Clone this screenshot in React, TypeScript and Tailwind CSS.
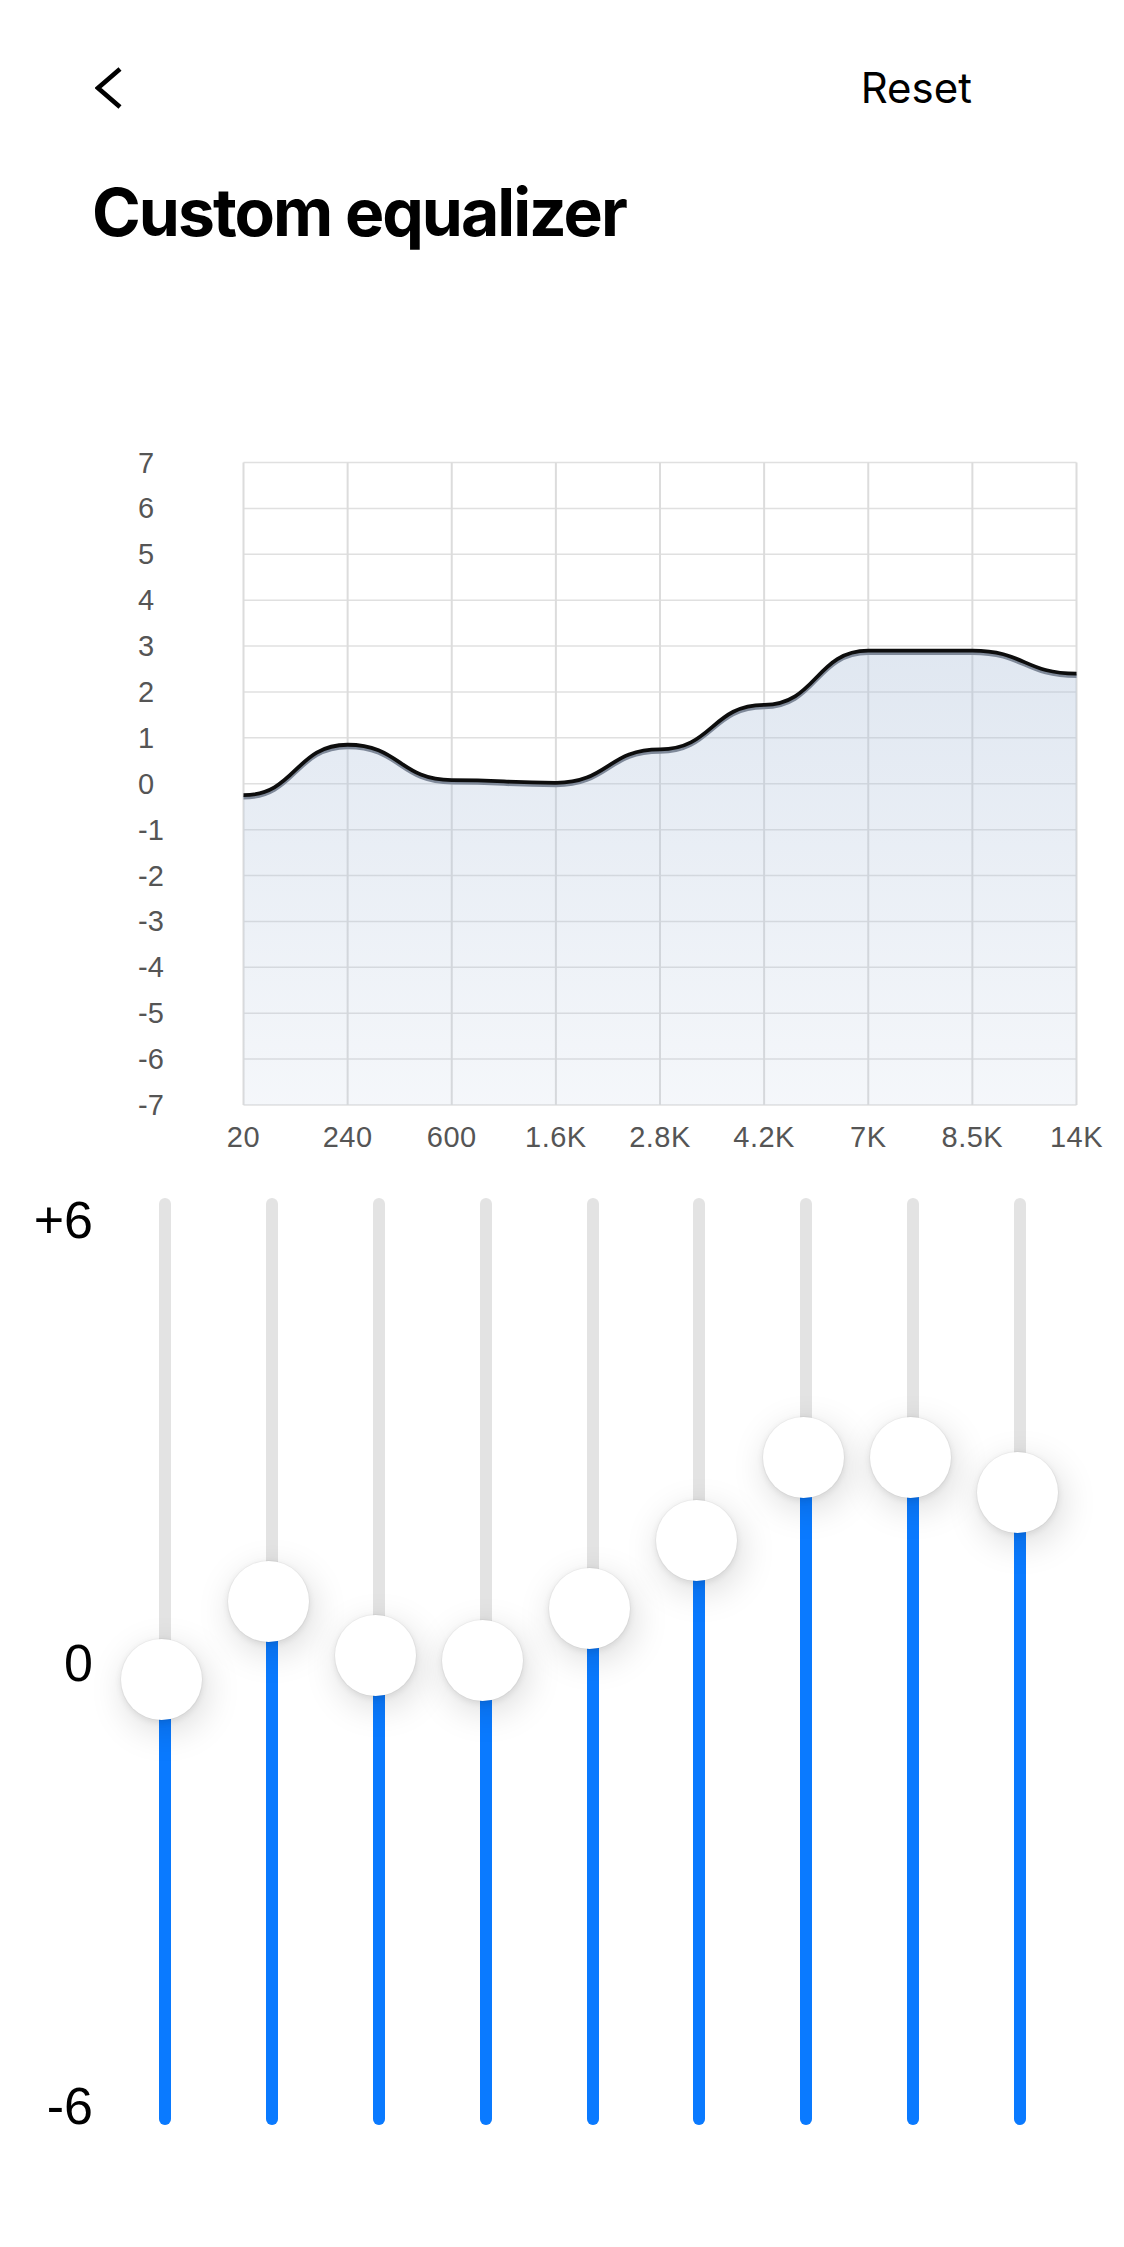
import { useState } from "react"

const BANDS = ["20", "240", "600", "1.6K", "2.8K", "4.2K", "7K", "8.5K", "14K"]
const START_GAINS = [-0.25, 0.85, 0.08, 0.02, 0.75, 1.72, 2.9, 2.9, 2.4]

// chart geometry (svg coords)
const L = 243.5
const R = 1076.5
const T = 32.5
const B = 675
const STEP = (R - L) / 8
const ROW = (B - T) / 14

const gy = (v: number) => T + (7 - v) * ROW

function curvePath(gains: number[]) {
  let d = `M ${L} ${gy(gains[0])}`
  for (let i = 1; i < gains.length; i++) {
    const x0 = L + (i - 1) * STEP
    const x1 = L + i * STEP
    const y0 = gy(gains[i - 1])
    const y1 = gy(gains[i])
    d += ` C ${x0 + STEP / 2} ${y0} ${x1 - STEP / 2} ${y1} ${x1} ${y1}`
  }
  return d
}

function Chart({ gains }: { gains: number[] }) {
  const line = curvePath(gains)
  const area = `${line} L ${R} ${B} L ${L} ${B} Z`
  const ticks = Array.from({ length: 15 }, (_, i) => 7 - i)

  return (
    <svg width="1124" height="740" viewBox="0 0 1124 740" className="block">
      <defs>
        <linearGradient id="eqFill" x1="0" y1={T + 150} x2="0" y2={B} gradientUnits="userSpaceOnUse">
          <stop offset="0" stopColor="#a9bdd8" stopOpacity="0.38" />
          <stop offset="1" stopColor="#a9bdd8" stopOpacity="0.12" />
        </linearGradient>
      </defs>

      {/* grid */}
      {ticks.map((v) => (
        <line key={v} x1={L} x2={R} y1={gy(v)} y2={gy(v)} stroke="#e0e0e0" strokeWidth="1.5" />
      ))}
      {BANDS.map((b, i) => (
        <line key={b} x1={L + i * STEP} x2={L + i * STEP} y1={T} y2={B} stroke="#dcdcdc" strokeWidth="2" />
      ))}

      <path d={area} fill="url(#eqFill)" />
      <path d={line} fill="none" stroke="#7f8999" strokeWidth="3.8" transform="translate(0 2.5)" />
      <path d={line} fill="none" stroke="#0d0d0d" strokeWidth="3.8" />

      {/* axis labels */}
      <g fontFamily="'Liberation Sans', Arial, sans-serif" fontSize="29" fill="#555555">
        {ticks.map((v) => (
          <text key={v} x="138" y={gy(v)} dominantBaseline="central">
            {v}
          </text>
        ))}
        {BANDS.map((b, i) => (
          <text key={b} x={L + i * STEP} y="707" textAnchor="middle" dominantBaseline="central" letterSpacing="0.5">
            {b}
          </text>
        ))}
      </g>
    </svg>
  )
}

const TRACK = 927
const THUMB = 81
const PER_DB = (TRACK - THUMB) / 12

function Slider({ value }: { value: number }) {
  const c = THUMB / 2 + (6 - value) * PER_DB
  return (
    <div className="relative h-full w-[106.9px]">
      <div className="relative mx-auto h-full w-[12px] overflow-hidden rounded-full bg-[#e3e3e3]">
        <div className="absolute bottom-0 left-0 w-full bg-[#0a7aff]" style={{ height: TRACK - c }} />
      </div>
      <div
        className="absolute left-1/2 -ml-[43.5px] h-[81px] w-[81px] rounded-full bg-white shadow-[4px_10px_36px_rgba(0,0,0,0.15),0_2px_7px_rgba(0,0,0,0.09)] ring-1 ring-black/[0.03]"
        style={{ top: c - THUMB / 2 }}
      />
    </div>
  )
}

export default function App() {
  const [gains] = useState(START_GAINS)

  return (
    <div className="min-h-[2247px] w-[1124px] bg-white text-black font-[Inter,sans-serif]">
      {/* Top bar */}
      <div className="flex items-start justify-between pl-[95px] pr-[152px] pt-[67px]">
        <svg width="28" height="42" viewBox="0 0 28 42" className="block">
          <path d="M25 2 L3 21 L25 40" fill="none" stroke="#000" strokeWidth="4.6" />
        </svg>
        <span className="text-[42px] leading-[42px]">Reset</span>
      </div>

      <h1 className="ml-[92px] mt-[70px] text-[66px] font-bold leading-[66px] tracking-[-0.03em]">Custom equalizer</h1>

      <div className="mt-[185px]">
        <Chart gains={gains} />
      </div>

      {/* Sliders */}
      <div className="mt-[28px] flex h-[927px]">
        <div className="-mb-[7px] -mt-[4px] flex w-[93px] flex-col items-end justify-between font-['Liberation_Sans',Arial,sans-serif] text-[52px] leading-[52px]">
          <span>+6</span>
          <span>0</span>
          <span>-6</span>
        </div>
        <div className="ml-[18.5px] flex h-full">
          {gains.map((g, i) => (
            <Slider key={BANDS[i]} value={g} />
          ))}
        </div>
      </div>
    </div>
  )
}
